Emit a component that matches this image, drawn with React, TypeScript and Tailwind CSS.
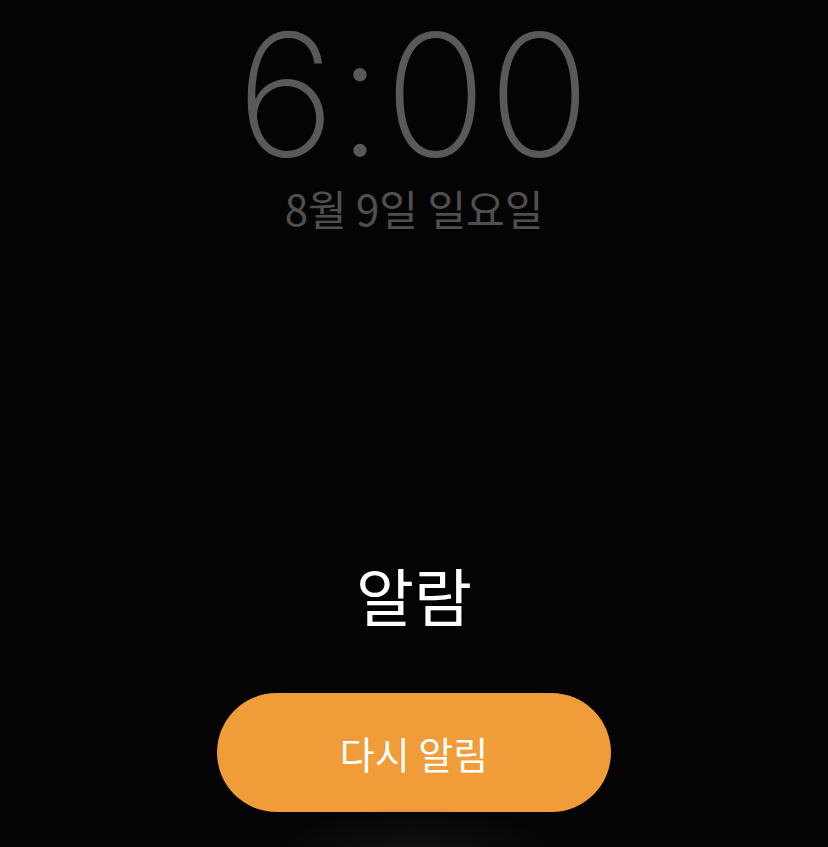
export default function App() {
  const kr = { fontFamily: '"Noto Sans CJK KR", "Noto Sans", sans-serif' };
  return (
    <div className="w-[828px] h-[847px] bg-[#050405] overflow-hidden relative flex flex-col items-center" style={kr}>
      <div
        className="mt-[4px] text-[170px] leading-[180px] text-[#5a595a] tracking-[1px]"
        style={{ fontFamily: 'Inter, "Noto Sans", sans-serif', fontWeight: 200 }}
      >
        6:00
      </div>
      <div className="mt-[0px] text-[42px] leading-[48px] text-[#504f50]">8월 9일 일요일</div>
      <div className="mt-[326px] text-[63px] leading-[72px] text-white">알람</div>
      <button className="mt-[63px] w-[394px] h-[119px] rounded-full bg-[#f09c38] text-white text-[38px] leading-none flex items-center justify-center">
        다시 알림
      </button>
      <div className="absolute bottom-[-60px] left-[264px] w-[300px] h-[100px] rounded-full bg-[radial-gradient(ellipse_at_center,_rgba(30,30,30,0.6),_transparent_70%)]" />
    </div>
  );
}
